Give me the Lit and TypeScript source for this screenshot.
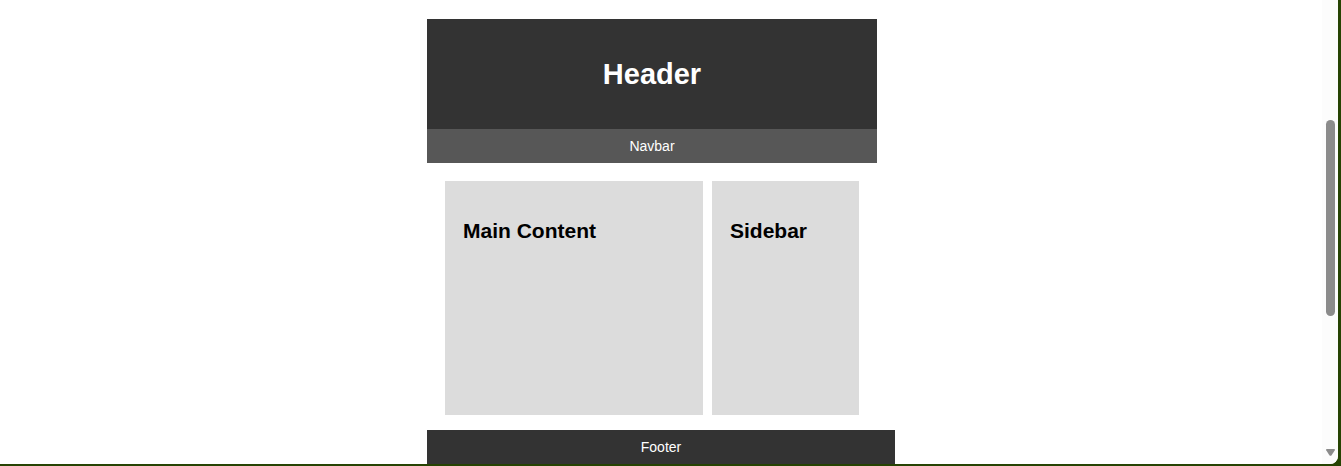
import { LitElement, html, css } from "lit";
import { customElement } from "lit/decorators.js";

@customElement("page-layout")
class PageLayout extends LitElement {
  static styles = css`
    :host {
      display: block;
      width: 100%;
      max-width: 468px;
      margin: 0 auto;
      padding-top: 19px;
      font: 14px/16px "Liberation Sans", Arial, sans-serif;
      color: #000;
    }
    .header,
    .navbar,
    .footer {
      color: #fff;
      text-align: center;
    }
    .header,
    .navbar {
      margin-right: 18px;
    }
    .header {
      padding: 38px 18px;
      background: #333;
    }
    .title {
      margin: 0;
      font-size: 29px;
      line-height: 34px;
    }
    .navbar {
      padding: 9px;
      background: #575757;
    }
    .content {
      display: grid;
      grid-template-columns: 258fr 147fr;
      gap: 9px;
      padding: 18px 36px 15px 18px;
    }
    .panel {
      min-height: 162px;
      padding: 36px 18px;
      background: #dcdcdc;
    }
    .heading {
      margin: 0;
      font-size: 21px;
      line-height: 28px;
    }
    .footer {
      padding: 9px;
      background: #333;
    }
  `;

  render() {
    return html`
      <header class="header"><h1 class="title">Header</h1></header>
      <nav class="navbar">Navbar</nav>
      <div class="content">
        <main class="panel"><h2 class="heading">Main Content</h2></main>
        <aside class="panel"><h2 class="heading">Sidebar</h2></aside>
      </div>
      <footer class="footer">Footer</footer>
    `;
  }
}

@customElement("scroll-track")
class ScrollTrack extends LitElement {
  static styles = css`
    :host {
      display: flex;
      flex-direction: column;
      align-items: flex-end;
      width: 16px;
      box-sizing: border-box;
      padding: 0 3px 8px 0;
      background: #fcfcfc;
    }
    .before {
      flex: 120;
    }
    .thumb {
      flex: 196;
      width: 9px;
      border-radius: 5px;
      background: #8b8b8b;
    }
    .after {
      flex: 133;
    }
    .arrow {
      display: block;
    }
  `;

  render() {
    return html`
      <div class="before"></div>
      <div class="thumb"></div>
      <div class="after"></div>
      <svg class="arrow" width="9" height="7" viewBox="0 0 9 7" aria-hidden="true">
        <path d="M.8 0H8.200Q9.300 .2 8.800 1.300L5.600 6.200Q4.500 7.500 3.400 6.200L.2 1.300Q-.3 .2 .8 0Z" fill="#8b8b8b" />
      </svg>
    `;
  }
}

@customElement("app-root")
class AppRoot extends LitElement {
  static styles = css`
    :host {
      display: block;
      min-height: 100vh;
      box-sizing: border-box;
      padding: 0 3px 2px 0;
      background: #264303;
    }
    .window {
      display: flex;
      min-height: calc(100vh - 2px);
      overflow: hidden;
      border-bottom-right-radius: 8px;
      background: #fff;
    }
    .view {
      flex: 1;
      min-width: 0;
    }
  `;

  render() {
    return html`
      <div class="window">
        <div class="view"><page-layout></page-layout></div>
        <scroll-track></scroll-track>
      </div>
    `;
  }
}
